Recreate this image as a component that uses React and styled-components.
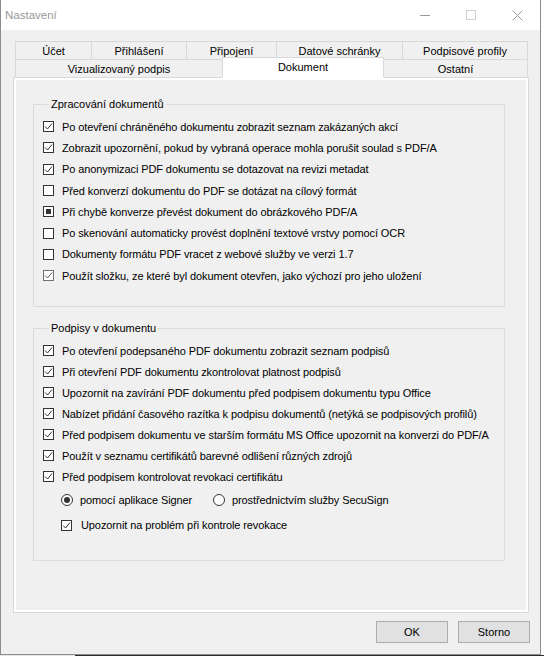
import React from 'react';
import styled, { createGlobalStyle, css } from 'styled-components';

const GlobalStyle = createGlobalStyle`
  html, body {
    margin: 0;
    padding: 0;
    background: #fff;
  }

  body {
    font-family: "Liberation Sans", Arial, sans-serif;
    font-size: 11px;
    color: #000;
  }

  * {
    box-sizing: border-box;
  }
`;

const TOP_TABS = [
  { label: 'Účet', width: 77 },
  { label: 'Přihlášení', width: 96 },
  { label: 'Připojení', width: 91 },
  { label: 'Datové schránky', width: 127 },
  { label: 'Podpisové profily', width: 126 }
];

const BOTTOM_TABS = [
  { label: 'Vizualizovaný podpis', width: 208 },
  { label: 'Dokument', width: 162, active: true },
  { label: 'Ostatní', width: 145 }
];

const DOCUMENT_OPTIONS = [
  { label: 'Po otevření chráněného dokumentu zobrazit seznam zakázaných akcí', state: 'checked' },
  { label: 'Zobrazit upozornění, pokud by vybraná operace mohla porušit soulad s PDF/A', state: 'checked' },
  { label: 'Po anonymizaci PDF dokumentu se dotazovat na revizi metadat', state: 'checked' },
  { label: 'Před konverzí dokumentu do PDF se dotázat na cílový formát', state: 'empty' },
  { label: 'Při chybě konverze převést dokument do obrázkového PDF/A', state: 'mixed' },
  { label: 'Po skenování automaticky provést doplnění textové vrstvy pomocí OCR', state: 'empty' },
  { label: 'Dokumenty formátu PDF vracet z webové služby ve verzi 1.7', state: 'empty' },
  { label: 'Použít složku, ze které byl dokument otevřen, jako výchozí pro jeho uložení', state: 'checked', muted: true }
];

const SIGNATURE_OPTIONS = [
  'Po otevření podepsaného PDF dokumentu zobrazit seznam podpisů',
  'Při otevření PDF dokumentu zkontrolovat platnost podpisů',
  'Upozornit na zavírání PDF dokumentu před podpisem dokumentu typu Office',
  'Nabízet přidání časového razítka k podpisu dokumentů (netýká se podpisových profilů)',
  'Před podpisem dokumentu ve starším formátu MS Office upozornit na konverzi do PDF/A',
  'Použít v seznamu certifikátů barevné odlišení různých zdrojů',
  'Před podpisem kontrolovat revokaci certifikátu'
];

const CheckBox = ({ state = 'checked', muted }) => (
  <Box $muted={muted}>
    {state === 'checked' && (
      <svg width="9" height="9" viewBox="0 0 9 9">
        <polyline
          points="1,4.5 3.5,7 8,1.5"
          fill="none"
          stroke={muted ? '#555' : '#333'}
          strokeWidth="1"
        />
      </svg>
    )}
    {state === 'mixed' && <Mixed />}
  </Box>
);

const Check = ({ state, muted, indent, gap, step, children }) => (
  <Row $indent={indent} $gap={gap} $step={step}>
    <CheckBox state={state} muted={muted} />
    <span>{children}</span>
  </Row>
);

const Radio = ({ checked, width, children }) => (
  <RadioOption $width={width}>
    <Circle>{checked && <Dot />}</Circle>
    <span>{children}</span>
  </RadioOption>
);

const App = () => (
  <>
    <GlobalStyle />
    <Window>
      <TitleBar>
        <Title>Nastavení</Title>
        <Captions>
          <CaptionButton>
            <svg width="10" height="10" viewBox="0 0 10 10">
              <line x1="0" y1="5.5" x2="10" y2="5.5" stroke="#999" strokeWidth="1" />
            </svg>
          </CaptionButton>
          <CaptionButton>
            <svg width="10" height="10" viewBox="0 0 10 10">
              <rect x="0.5" y="0.5" width="9" height="9" fill="none" stroke="#d0d0d0" strokeWidth="1" />
            </svg>
          </CaptionButton>
          <CaptionButton>
            <svg width="11" height="11" viewBox="0 0 11 11">
              <path d="M0.5 0.5 L10.5 10.5 M10.5 0.5 L0.5 10.5" stroke="#999" strokeWidth="1" />
            </svg>
          </CaptionButton>
        </Captions>
      </TitleBar>

      <Content>
        <TabStrip>
          <TabRow>
            {TOP_TABS.map(t => (
              <Tab key={t.label} $width={t.width}>{t.label}</Tab>
            ))}
          </TabRow>
          <TabRow $lower>
            {BOTTOM_TABS.map(t => (
              <Tab key={t.label} $width={t.width} $active={t.active}>{t.label}</Tab>
            ))}
          </TabRow>
        </TabStrip>

        <Pane>
          <Page>
            <Group $top={0} $bottom={20}>
              <Legend>Zpracování dokumentů</Legend>
              {DOCUMENT_OPTIONS.map(o => (
                <Check key={o.label} state={o.state} muted={o.muted}>{o.label}</Check>
              ))}
            </Group>

            <Group $top={14} $bottom={24}>
              <Legend>Podpisy v dokumentu</Legend>
              {SIGNATURE_OPTIONS.map(label => (
                <Check key={label} state="checked" step={21}>{label}</Check>
              ))}
              <RadioRow>
                <Radio checked width={152}>pomocí aplikace Signer</Radio>
                <Radio>prostřednictvím služby SecuSign</Radio>
              </RadioRow>
              <Check state="checked" indent={18} gap={9}>Upozornit na problém při kontrole revokace</Check>
            </Group>
          </Page>
        </Pane>

        <ButtonBar>
          <Button>OK</Button>
          <Button>Storno</Button>
        </ButtonBar>
      </Content>
    </Window>
    <Backdrop>
      <DesktopPart />
      <TaskPart />
    </Backdrop>
  </>
);

const Window = styled.div`
  width: 541px;
  height: 655px;
  display: flex;
  flex-direction: column;
  background: #f0f0f0;
  border: 1px solid #8c8c8c;
  border-top: none;
`;

const TitleBar = styled.div`
  height: 30px;
  flex: none;
  display: flex;
  align-items: center;
  justify-content: space-between;
  background: #fff;
`;

const Title = styled.span`
  padding-left: 4px;
  font-size: 11.5px;
  color: #999;
`;

const Captions = styled.div`
  display: flex;
  height: 100%;
`;

const CaptionButton = styled.div`
  width: 46px;
  height: 100%;
  display: flex;
  align-items: center;
  justify-content: center;
`;

const Content = styled.div`
  flex: 1;
  display: flex;
  flex-direction: column;
  padding: 11px 11px 11px 12px;
`;

const TabStrip = styled.div`
  display: flex;
  flex-direction: column;
  margin: 0 2px;
`;

const TabRow = styled.div`
  display: flex;
  margin-top: ${p => (p.$lower ? -1 : 0)}px;
`;

const Tab = styled.div`
  flex: none;
  width: ${p => p.$width}px;
  height: 19px;
  display: flex;
  align-items: center;
  justify-content: center;
  border: 1px solid #d9d9d9;
  background: #f0f0f0;
  white-space: nowrap;

  & + & {
    margin-left: -1px;
  }

  ${p => p.$active && css`
    position: relative;
    z-index: 2;
    height: 21px;
    margin-top: -2px;
    padding-bottom: 2px;
    background: #fff;
    border-bottom-color: #fff;
  `}
`;

const Pane = styled.div`
  margin-top: -1px;
  height: 536px;
  flex: none;
  border: 1px solid #d9d9d9;
  background: #fff;
  padding: 2px;
`;

const Page = styled.div`
  height: 100%;
  background: #f0f0f0;
  padding: 17px 21px 0 17px;
`;

const Group = styled.fieldset`
  width: 472px;
  min-width: 0;
  margin: ${p => p.$top}px 0 0;
  padding: 5px 0 ${p => p.$bottom}px 9px;
  border: 1px solid #dcdcdc;
`;

const Legend = styled.legend`
  margin-left: 6px;
  padding: 0 2px;
  line-height: 14px;
`;

const Row = styled.label`
  display: flex;
  align-items: center;
  gap: ${p => p.$gap ?? 8}px;
  height: ${p => p.$step ?? 21.3}px;
  margin-left: ${p => p.$indent || 0}px;
  margin-top: ${p => (p.$indent ? 4 : 0)}px;
  white-space: nowrap;
  letter-spacing: -0.1px;
`;

const Box = styled.span`
  flex: none;
  width: 11px;
  height: 11px;
  display: flex;
  align-items: center;
  justify-content: center;
  border: 1px solid ${p => (p.$muted ? '#707070' : '#333')};
  background: #fff;
`;

const Mixed = styled.span`
  width: 5px;
  height: 5px;
  background: #333;
`;

const RadioRow = styled.div`
  display: flex;
  align-items: center;
  height: 21px;
  margin: 2px 0 0 18px;
  letter-spacing: -0.1px;
  white-space: nowrap;
`;

const RadioOption = styled.label`
  display: flex;
  align-items: center;
  gap: 7px;
  width: ${p => (p.$width ? `${p.$width}px` : 'auto')};
`;

const Circle = styled.span`
  flex: none;
  width: 12px;
  height: 12px;
  display: flex;
  align-items: center;
  justify-content: center;
  border: 1px solid #333;
  border-radius: 50%;
  background: #fff;
`;

const Dot = styled.span`
  width: 6px;
  height: 6px;
  border-radius: 50%;
  background: #333;
`;

const ButtonBar = styled.div`
  display: flex;
  justify-content: flex-end;
  gap: 10px;
  margin: 8px -1px 0 0;
`;

const Button = styled.button`
  width: 72px;
  height: 22px;
  padding: 0;
  border: 1px solid #adadad;
  background: #e1e1e1;
  font-family: inherit;
  font-size: 11px;
  color: #000;
`;

const Backdrop = styled.div`
  display: flex;
  height: 1px;
`;

const DesktopPart = styled.div`
  width: 75px;
  background: #e6e6e6;
`;

const TaskPart = styled.div`
  flex: 1;
  background: #2b2b2b;
`;

export default App;
